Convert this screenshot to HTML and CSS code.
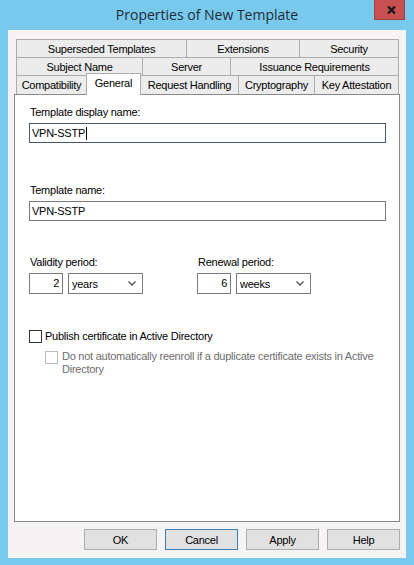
FILE: index.html
```html
<!DOCTYPE html>
<html>
<head>
<meta charset="utf-8">
<link rel="stylesheet" href="styles.css">
</head>
<body>
<div class="window">
  <div class="titlebar">
    <span></span>
    <div class="title">Properties of New Template</div>
    <div class="close"><svg width="9" height="8" viewBox="0 0 9 8"><path d="M1 0.5 L8 7.5 M8 0.5 L1 7.5" stroke="#1a1a1a" stroke-width="2.4" fill="none"/></svg></div>
  </div>
  <div class="client">
    <div class="tabs">
      <div class="tabrow">
        <div class="tab w-sup">Superseded Templates</div>
        <div class="tab w-ext">Extensions</div>
        <div class="tab grow">Security</div>
      </div>
      <div class="tabrow">
        <div class="tab w-subj">Subject Name</div>
        <div class="tab w-srv">Server</div>
        <div class="tab grow">Issuance Requirements</div>
      </div>
      <div class="tabrow front">
        <div class="tab w-comp">Compatibility</div>
        <div class="tab w-gen selected">General</div>
        <div class="tab w-req">Request Handling</div>
        <div class="tab w-cry">Cryptography</div>
        <div class="tab grow">Key Attestation</div>
      </div>
    </div>
    <div class="panel">
      <div class="label">Template display name:</div>
      <div class="field focused"><span>VPN-SSTP</span><span class="caret"></span></div>
      <div class="label gap-name">Template name:</div>
      <div class="field"><span>VPN-SSTP</span></div>
      <div class="periods">
        <div class="period">
          <div class="label">Validity period:</div>
          <div class="spin-row">
            <div class="num">2</div>
            <div class="select"><span>years</span><svg width="8" height="5" viewBox="0 0 8 5"><path d="M0.5 0.5 L4 4 L7.5 0.5" stroke="#4a4a4a" stroke-width="1.3" fill="none"/></svg></div>
          </div>
        </div>
        <div class="period">
          <div class="label">Renewal period:</div>
          <div class="spin-row">
            <div class="num">6</div>
            <div class="select"><span>weeks</span><svg width="8" height="5" viewBox="0 0 8 5"><path d="M0.5 0.5 L4 4 L7.5 0.5" stroke="#4a4a4a" stroke-width="1.3" fill="none"/></svg></div>
          </div>
        </div>
      </div>
      <div class="check-row">
        <span class="box"></span>
        <span class="check-text">Publish certificate in Active Directory</span>
      </div>
      <div class="check-row sub disabled">
        <span class="box"></span>
        <span class="check-text">Do not automatically reenroll if a duplicate certificate exists in Active Directory</span>
      </div>
    </div>
    <div class="buttons">
      <div class="btn">OK</div>
      <div class="btn default">Cancel</div>
      <div class="btn">Apply</div>
      <div class="btn">Help</div>
    </div>
  </div>
</div>
</body>
</html>
```
FILE: styles.css
```css
html, body {
  margin: 0;
  padding: 0;
}
body {
  background: #79c9ec;
  font-family: "Liberation Sans", Arial, sans-serif;
  font-size: 11px;
  letter-spacing: -0.25px;
  color: #000;
}
.window {
  width: 414px;
  height: 565px;
  display: flex;
  flex-direction: column;
}
.titlebar {
  height: 30px;
  display: grid;
  grid-template-columns: 1fr auto 1fr;
  align-items: start;
}
.title {
  font-family: "Open Sans", "Liberation Sans", sans-serif;
  font-size: 14px;
  letter-spacing: 0;
  line-height: 29px;
  color: #1e2d38;
}
.close {
  justify-self: end;
  margin-right: 9px;
  width: 31px;
  height: 20px;
  box-sizing: border-box;
  background: #c75050;
  border: 1px solid #a63f3f;
  border-top: 0;
  display: flex;
  align-items: center;
  justify-content: center;
  padding-left: 3px;
}
.client {
  flex: 1;
  margin: 0 8px 7px;
  background: #f6f3f5;
  display: flex;
  flex-direction: column;
  padding: 9px 6px 8px;
  box-sizing: border-box;
}
.tabs {
  margin: 0 1px 0 2px;
}
.tabrow {
  display: flex;
  height: 18px;
}
.tabrow.front {
  height: 19px;
}
.tab {
  box-sizing: border-box;
  height: 100%;
  border: 1px solid #acacac;
  border-bottom: 0;
  background: #ececec;
  display: flex;
  align-items: center;
  justify-content: center;
  white-space: nowrap;
  margin-left: -1px;
  flex: none;
}
.tab:first-child {
  margin-left: 0;
}
.tab.grow {
  flex: 1;
}
.w-sup { width: 171px; }
.w-ext { width: 114px; }
.w-subj { width: 127px; }
.w-srv { width: 89px; }
.w-comp { width: 71px; }
.w-gen { width: 55px; }
.w-req { width: 99px; }
.w-cry { width: 77px; }
.tab.selected {
  position: relative;
  z-index: 1;
  background: #fff;
  height: 22px;
  margin-top: -2px;
  align-self: flex-start;
  padding-bottom: 3px;
}
.panel {
  flex: 1;
  background: #fff;
  border: 1px solid #898989;
  padding: 11px 13px 0 14px;
  box-sizing: border-box;
}
.label {
  line-height: 13px;
  margin-bottom: 4px;
  padding-left: 1px;
}
.gap-name {
  margin-top: 41px;
}
.field {
  height: 20px;
  box-sizing: border-box;
  border: 1px solid #7a7a7a;
  display: flex;
  align-items: center;
  padding-left: 2px;
}
.field.focused {
  border-color: #4a5968;
}
.caret {
  width: 1px;
  height: 13px;
  background: #000;
  margin-left: 1px;
}
.periods {
  display: grid;
  grid-template-columns: 168px auto;
  margin-top: 35px;
}
.spin-row {
  display: flex;
  gap: 5px;
}
.num {
  width: 34px;
  height: 21px;
  box-sizing: border-box;
  border: 1px solid #7a7a7a;
  text-align: right;
  padding-right: 3px;
  line-height: 19px;
}
.select {
  width: 75px;
  height: 21px;
  box-sizing: border-box;
  border: 1px solid #7a7a7a;
  display: flex;
  align-items: center;
  justify-content: space-between;
  padding: 0 6px 0 3px;
}
.check-row {
  display: flex;
  align-items: center;
  gap: 3px;
  margin-top: 36px;
  line-height: 13px;
}
.box {
  width: 13px;
  height: 13px;
  box-sizing: border-box;
  border: 1px solid #333;
  background: #fff;
  flex: none;
}
.check-row.sub {
  margin-top: 7px;
  margin-left: 16px;
  gap: 4px;
  align-items: flex-start;
}
.check-row.sub .box {
  margin-top: 1px;
}
.disabled {
  color: #6d6d6d;
}
.disabled .box {
  border-color: #bcbcbc;
}
.buttons {
  display: flex;
  justify-content: flex-end;
  gap: 8px;
  margin-top: 7px;
}
.btn {
  width: 73px;
  height: 21px;
  box-sizing: border-box;
  border: 1px solid #adadad;
  background: #e1e1e1;
  display: flex;
  align-items: center;
  justify-content: center;
}
.btn.default {
  border-color: #3c7fb1;
}
```
